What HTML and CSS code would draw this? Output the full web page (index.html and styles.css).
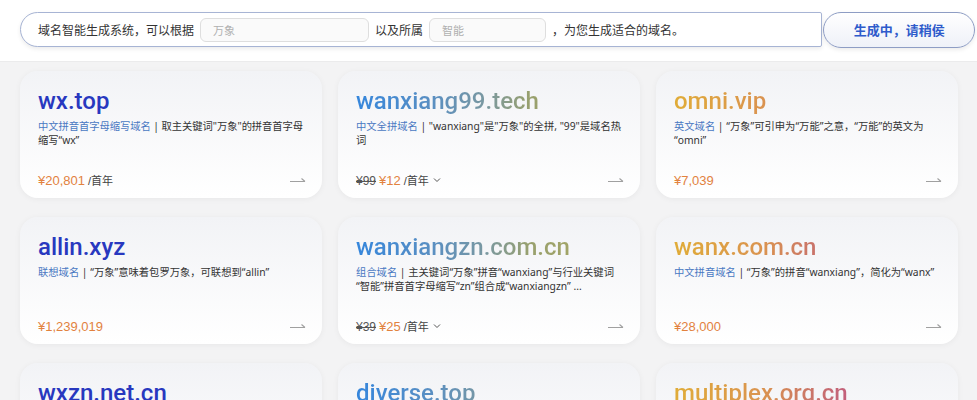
FILE: index.html
```html
<!DOCTYPE html>
<html lang="zh-CN">
<head>
  <meta charset="UTF-8" />
  <meta name="viewport" content="width=device-width, initial-scale=1.0">
  <title>域名智能生成</title>
  <link rel="stylesheet" href="styles.css">
</head>
<body>

  <!-- Строка поиска -->
  <div class="header">
    <div class="search-bar">
      <span class="search-text">域名智能生成系统，可以根据</span>
      <input type="text" class="search-input input-keyword" placeholder="万象" />
      <span class="search-text">以及所属</span>
      <input type="text" class="search-input input-industry" placeholder="智能" />
      <span class="search-text">，为您生成适合的域名。</span>
    </div>
    <button class="generate-btn">生成中，请稍侯</button>
  </div>

  <!-- Карточки доменов -->
  <div class="domain-grid">

    <div class="domain-card">
      <div class="domain-name name-blue">wx.top</div>
      <div class="domain-desc desc-tight"><span class="desc-type">中文拼音首字母缩写域名</span> | 取主关键词"万象"的拼音首字母缩写“wx”</div>
      <div class="card-footer">
        <div class="price"><span class="price-now">¥20,801</span> <span class="price-unit">/首年</span></div>
        <span class="arrow"><svg width="17" height="9" viewBox="0 0 17 9"><path d="M1 5.5H16M12.5 2.5L16 5.5" fill="none" stroke="#a0a0a0" stroke-width="1.1"/></svg></span>
      </div>
    </div>

    <div class="domain-card">
      <div class="domain-name name-teal">wanxiang99.tech</div>
      <div class="domain-desc"><span class="desc-type">中文全拼域名</span> | "wanxiang"是"万象"的全拼, "99"是域名热词</div>
      <div class="card-footer">
        <div class="price"><span class="price-old">¥99</span> <span class="price-now">¥12</span> <span class="price-unit">/首年</span><span class="chevron"><svg width="8" height="6" viewBox="0 0 8 6"><path d="M1 1.5L4 4.5L7 1.5" fill="none" stroke="#555" stroke-width="1"/></svg></span></div>
        <span class="arrow"><svg width="17" height="9" viewBox="0 0 17 9"><path d="M1 5.5H16M12.5 2.5L16 5.5" fill="none" stroke="#a0a0a0" stroke-width="1.1"/></svg></span>
      </div>
    </div>

    <div class="domain-card">
      <div class="domain-name name-gold">omni.vip</div>
      <div class="domain-desc"><span class="desc-type">英文域名</span> | “万象”可引申为“万能”之意，“万能”的英文为“omni”</div>
      <div class="card-footer">
        <div class="price"><span class="price-now">¥7,039</span></div>
        <span class="arrow"><svg width="17" height="9" viewBox="0 0 17 9"><path d="M1 5.5H16M12.5 2.5L16 5.5" fill="none" stroke="#a0a0a0" stroke-width="1.1"/></svg></span>
      </div>
    </div>

    <div class="domain-card">
      <div class="domain-name name-blue">allin.xyz</div>
      <div class="domain-desc"><span class="desc-type">联想域名</span> | “万象”意味着包罗万象，可联想到“allin”</div>
      <div class="card-footer">
        <div class="price"><span class="price-now">¥1,239,019</span></div>
        <span class="arrow"><svg width="17" height="9" viewBox="0 0 17 9"><path d="M1 5.5H16M12.5 2.5L16 5.5" fill="none" stroke="#a0a0a0" stroke-width="1.1"/></svg></span>
      </div>
    </div>

    <div class="domain-card">
      <div class="domain-name name-teal">wanxiangzn.com.cn</div>
      <div class="domain-desc"><span class="desc-type">组合域名</span> | 主关键词“万象”拼音“wanxiang”与行业关键词“智能”拼音首字母缩写“zn”组合成“wanxiangzn” ...</div>
      <div class="card-footer">
        <div class="price"><span class="price-old">¥39</span> <span class="price-now">¥25</span> <span class="price-unit">/首年</span><span class="chevron"><svg width="8" height="6" viewBox="0 0 8 6"><path d="M1 1.5L4 4.5L7 1.5" fill="none" stroke="#555" stroke-width="1"/></svg></span></div>
        <span class="arrow"><svg width="17" height="9" viewBox="0 0 17 9"><path d="M1 5.5H16M12.5 2.5L16 5.5" fill="none" stroke="#a0a0a0" stroke-width="1.1"/></svg></span>
      </div>
    </div>

    <div class="domain-card">
      <div class="domain-name name-gold">wanx.com.cn</div>
      <div class="domain-desc"><span class="desc-type">中文拼音域名</span> | “万象”的拼音“wanxiang”，简化为“wanx”</div>
      <div class="card-footer">
        <div class="price"><span class="price-now">¥28,000</span></div>
        <span class="arrow"><svg width="17" height="9" viewBox="0 0 17 9"><path d="M1 5.5H16M12.5 2.5L16 5.5" fill="none" stroke="#a0a0a0" stroke-width="1.1"/></svg></span>
      </div>
    </div>

    <div class="domain-card">
      <div class="domain-name name-blue">wxzn.net.cn</div>
      <div class="domain-desc"><span class="desc-type">组合缩写域名</span> | “万象”与“智能”的拼音首字母组合</div>
      <div class="card-footer">
        <div class="price"><span class="price-now">¥9,800</span></div>
        <span class="arrow"><svg width="17" height="9" viewBox="0 0 17 9"><path d="M1 5.5H16M12.5 2.5L16 5.5" fill="none" stroke="#a0a0a0" stroke-width="1.1"/></svg></span>
      </div>
    </div>

    <div class="domain-card">
      <div class="domain-name name-teal">diverse.top</div>
      <div class="domain-desc"><span class="desc-type">英文域名</span> | “万象”有多样之意，英文为“diverse”</div>
      <div class="card-footer">
        <div class="price"><span class="price-now">¥5,200</span></div>
        <span class="arrow"><svg width="17" height="9" viewBox="0 0 17 9"><path d="M1 5.5H16M12.5 2.5L16 5.5" fill="none" stroke="#a0a0a0" stroke-width="1.1"/></svg></span>
      </div>
    </div>

    <div class="domain-card">
      <div class="domain-name name-gold">multiplex.org.cn</div>
      <div class="domain-desc"><span class="desc-type">英文域名</span> | “万象”意为多种多样，英文为“multiplex”</div>
      <div class="card-footer">
        <div class="price"><span class="price-now">¥3,600</span></div>
        <span class="arrow"><svg width="17" height="9" viewBox="0 0 17 9"><path d="M1 5.5H16M12.5 2.5L16 5.5" fill="none" stroke="#a0a0a0" stroke-width="1.1"/></svg></span>
      </div>
    </div>

  </div>

</body>
</html>
```

FILE: styles.css
```css
body {
  font-family: "Liberation Sans", "Noto Sans CJK SC", sans-serif;
  background-color: #f3f3f4;
  margin: 0;
  padding: 0;
}

.header {
  display: flex;
  align-items: center;
  height: 62px;
  padding: 0 2px 0 20px;
  box-sizing: border-box;
  background-color: #fff;
  border-bottom: 1px solid #ebebec;
}

.search-bar {
  display: flex;
  align-items: center;
  width: 804px;
  height: 35px;
  padding-left: 17px;
  box-sizing: border-box;
  border: 1px solid #a7b4d4;
  border-radius: 18px 2px 2px 18px;
  box-shadow: 0 2px 4px rgba(0, 0, 0, 0.08);
  background-color: #fff;
  margin-top: -2px;
}

.search-text {
  font-family: "Noto Sans CJK SC", sans-serif;
  font-size: 12px;
  color: #333;
}

.search-input {
  height: 24px;
  margin: 0 6px 0 6px;
  padding: 0 12px;
  box-sizing: border-box;
  border: 1px solid #dedede;
  border-radius: 6px;
  background-color: #fafafa;
  font-family: "Noto Sans CJK SC", sans-serif;
  font-size: 11px;
  outline: none;
}

.search-input::placeholder {
  color: #b0b0b0;
}

.input-keyword {
  width: 169px;
}

.input-industry {
  width: 117px;
}

.generate-btn {
  width: 152px;
  height: 36px;
  margin-top: -2px;
  margin-left: 1px;
  border: 1px solid #8e9dc4;
  border-radius: 18px;
  background: linear-gradient(180deg, #ffffff 0%, #eef1f8 100%);
  box-shadow: 0 2px 4px rgba(0, 0, 0, 0.08);
  color: #2e5bcb;
  font-family: "Noto Sans CJK SC", sans-serif;
  font-size: 13px;
  font-weight: bold;
  cursor: pointer;
}

.domain-grid {
  display: grid;
  grid-template-columns: repeat(3, 302px);
  column-gap: 16px;
  row-gap: 19px;
  padding: 9px 19px 20px 20px;
}

.domain-card {
  display: flex;
  flex-direction: column;
  height: 127px;
  padding: 16px 13px 8px 18px;
  box-sizing: border-box;
  border-radius: 18px;
  background: linear-gradient(180deg, #f2f3f6 0%, #ffffff 100%);
  box-shadow: 0 1px 6px rgba(0, 0, 0, 0.05);
}

.domain-name {
  font-family: Roboto, "Liberation Sans", sans-serif;
  font-size: 24px;
  font-weight: 500;
  line-height: 28px;
  white-space: nowrap;
}

.name-blue {
  color: #2838bf;
}

.name-teal {
  background: linear-gradient(90deg, #3586dc 0%, #5a8fc2 28%, #7a98a0 48%, #98a06e 64%, #a2a466 80%);
  -webkit-background-clip: text;
  background-clip: text;
  color: transparent;
}

.name-gold {
  background: linear-gradient(90deg, #e0ac38 0%, #da9350 33%, #c9736a 52%, #c25e7e 65%);
  -webkit-background-clip: text;
  background-clip: text;
  color: transparent;
}

.domain-desc {
  margin-top: 4px;
  margin-right: 3px;
  font-family: "Noto Sans", "Noto Sans CJK SC", sans-serif;
  font-size: 10.3px;
  line-height: 14px;
  color: #333;
}

.desc-tight {
  margin-right: 0;
  letter-spacing: -0.05px;
}

.desc-type {
  color: #4a78c2;
}

.card-footer {
  display: flex;
  align-items: center;
  justify-content: space-between;
  margin-top: auto;
  margin-right: 3px;
  height: 20px;
}

.price {
  display: flex;
  align-items: baseline;
  gap: 3px;
  font-size: 12px;
}

.price-now {
  color: #e2823e;
  font-size: 13px;
}

.price-old {
  color: #555;
  font-size: 12px;
  text-decoration: line-through;
}

.price-unit {
  color: #444;
  font-size: 11px;
}

.chevron {
  display: inline-flex;
  align-self: center;
  margin-left: 1px;
}

.arrow {
  display: flex;
}
```
